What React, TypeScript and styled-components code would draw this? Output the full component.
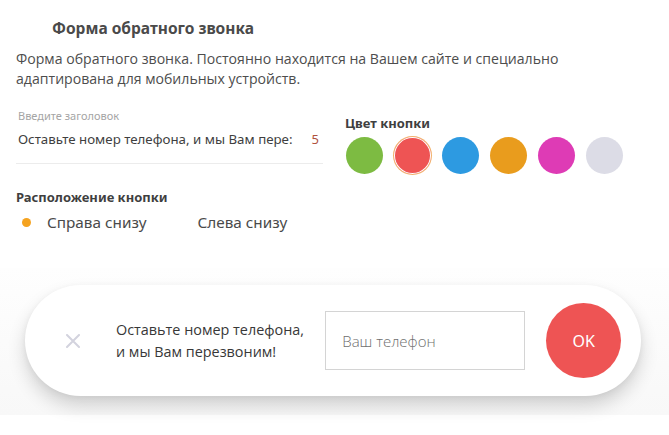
import React, { useState } from 'react';
import styled, { createGlobalStyle } from 'styled-components';

const GlobalStyle = createGlobalStyle`
  html, body {
    margin: 0;
    padding: 0;
    background: #fff;
  }
  body {
    font-family: "Open Sans", "Noto Sans", sans-serif;
    color: #444;
  }
`;

const Page = styled.div`
  width: 669px;
  height: 435px;
  overflow: hidden;
  display: flex;
  flex-direction: column;
`;

const Settings = styled.div`
  padding: 18px 16px 0 16px;
`;

const Title = styled.h2`
  margin: 0 0 0 36px;
  font-family: "Noto Sans", sans-serif;
  font-weight: 700;
  font-size: 15.5px;
  line-height: 20px;
  color: #4a4a4a;
`;

const Description = styled.p`
  margin: 11px 0 0 0;
  font-size: 14.1px;
  line-height: 20px;
  color: #4d4d4d;
  width: 600px;
`;

const Columns = styled.div`
  display: flex;
  gap: 22px;
  margin-top: 20px;
`;

const LeftCol = styled.div`
  width: 307px;
  display: flex;
  flex-direction: column;
`;

const RightCol = styled.div`
  display: flex;
  flex-direction: column;
  padding-top: 5px;
`;

const FieldLabel = styled.div`
  font-family: "Noto Sans", sans-serif;
  font-size: 11px;
  line-height: 14px;
  color: #a5a5a5;
  padding-left: 2px;
`;

const FieldRow = styled.div`
  display: flex;
  align-items: center;
  justify-content: space-between;
  padding: 6px 4px 14px 2px;
  border-bottom: 1px solid #ececec;
`;

const FieldValue = styled.div`
  font-family: "Noto Sans", sans-serif;
  font-size: 13.3px;
  line-height: 20px;
  color: #3f3f3f;
  white-space: nowrap;
  overflow: hidden;
  width: 280px;
`;

const Counter = styled.span`
  font-family: "Noto Sans", sans-serif;
  font-size: 13px;
  line-height: 20px;
  color: #b0523d;
`;

const SectionTitle = styled.div`
  font-family: "Noto Sans", sans-serif;
  font-weight: 700;
  font-size: 13px;
  line-height: 18px;
  color: #3f3f3f;
`;

const PositionTitle = styled(SectionTitle)`
  margin-top: 24px;
`;

const Options = styled.div`
  display: flex;
  margin-top: 6px;
  padding-left: 6px;
`;

const Option = styled.label`
  display: flex;
  align-items: center;
  gap: 16px;
  font-family: "Noto Sans", sans-serif;
  font-size: 15.3px;
  line-height: 20px;
  color: #4a4a4a;
  width: 158px;
  cursor: pointer;
`;

const Dot = styled.span<{ $active?: boolean }>`
  width: 9px;
  height: 9px;
  border-radius: 50%;
  background: ${p => (p.$active ? '#f5a320' : 'transparent')};
  flex-shrink: 0;
`;

const Swatches = styled.div`
  display: flex;
  gap: 11px;
  margin-top: 5px;
  padding-left: 1px;
`;

const Swatch = styled.button<{ $color: string; $selected?: boolean }>`
  width: 37px;
  height: 37px;
  border-radius: 50%;
  border: none;
  padding: 0;
  background: ${p => p.$color};
  cursor: pointer;
  box-shadow: ${p => (p.$selected ? 'inset 0 0 0 1px #fff, 0 0 0 1px #f2b26c' : 'none')};
`;

const Preview = styled.div`
  margin-top: auto;
  margin-bottom: 20px;
  height: 147px;
  display: flex;
  align-items: center;
  background: linear-gradient(#fefefe, #f8f8f8);
  padding-left: 25px;
`;

const Pill = styled.div`
  width: 616px;
  height: 111px;
  border-radius: 56px;
  background: #fff;
  box-shadow: 0 10px 18px rgba(0, 0, 0, 0.16), 0 2px 6px rgba(0, 0, 0, 0.05);
  display: flex;
  align-items: center;
  padding: 0 20px 0 40px;
  box-sizing: border-box;
  margin-top: -2px;
`;

const Close = styled.button`
  border: none;
  background: none;
  padding: 0;
  width: 16px;
  height: 16px;
  display: flex;
  align-items: center;
  justify-content: center;
  cursor: pointer;
`;

const CallText = styled.div`
  margin-left: 35px;
  width: 192px;
  font-size: 14.4px;
  line-height: 22px;
  font-weight: 400;
  color: #383838;
  white-space: nowrap;
`;

const PhoneInput = styled.input`
  margin-left: 18px;
  width: 200px;
  height: 59px;
  box-sizing: border-box;
  border: 1px solid #d4d4d4;
  padding: 0 16px;
  font-family: "Open Sans", sans-serif;
  font-weight: 300;
  font-size: 15px;
  color: #555;
  outline: none;
  &::placeholder {
    color: #6e6e6e;
  }
`;

const OkButton = styled.button<{ $color: string }>`
  margin-left: 21px;
  width: 75px;
  height: 75px;
  border-radius: 50%;
  border: none;
  background: ${p => p.$color};
  color: #fff;
  font-family: "Noto Sans", sans-serif;
  font-size: 16px;
  font-weight: 400;
  cursor: pointer;
`;

const colors = ['#7dbb42', '#ee5454', '#2d9ae1', '#e99c1d', '#de3bb5', '#dcdce6'];

export default function App() {
  const [color, setColor] = useState(1);
  const [side, setSide] = useState<'right' | 'left'>('right');

  return (
    <Page>
      <GlobalStyle />
      <Settings>
        <Title>Форма обратного звонка</Title>
        <Description>
          Форма обратного звонка. Постоянно находится на Вашем сайте и специально
          <br />
          адаптирована для мобильных устройств.
        </Description>
        <Columns>
          <LeftCol>
            <FieldLabel>Введите заголовок</FieldLabel>
            <FieldRow>
              <FieldValue>Оставьте номер телефона, и мы Вам пере:</FieldValue>
              <Counter>5</Counter>
            </FieldRow>
            <PositionTitle>Расположение кнопки</PositionTitle>
            <Options>
              <Option onClick={() => setSide('right')}>
                <Dot $active={side === 'right'} />
                Справа снизу
              </Option>
              <Option onClick={() => setSide('left')}>
                <Dot $active={side === 'left'} />
                Слева снизу
              </Option>
            </Options>
          </LeftCol>
          <RightCol>
            <SectionTitle>Цвет кнопки</SectionTitle>
            <Swatches>
              {colors.map((c, i) => (
                <Swatch key={c} $color={c} $selected={i === color} onClick={() => setColor(i)} />
              ))}
            </Swatches>
          </RightCol>
        </Columns>
      </Settings>
      <Preview>
        <Pill>
          <Close aria-label="Закрыть">
            <svg width="14" height="14" viewBox="0 0 14 14">
              <path d="M1 1 L13 13 M13 1 L1 13" stroke="#d3d3de" strokeWidth="2" strokeLinecap="round" />
            </svg>
          </Close>
          <CallText>
            Оставьте номер телефона,
            <br />
            и мы Вам перезвоним!
          </CallText>
          <PhoneInput placeholder="Ваш телефон" />
          <OkButton $color={colors[color]}>OK</OkButton>
        </Pill>
      </Preview>
    </Page>
  );
}
